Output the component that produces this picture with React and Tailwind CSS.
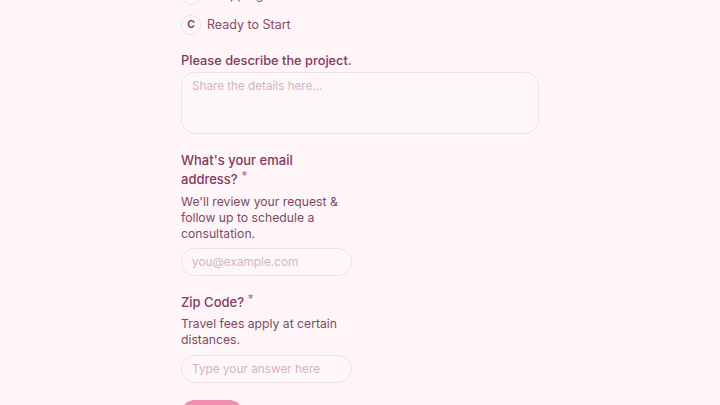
export default function App() {
  return (
    <div className="min-h-[405px] h-[405px] overflow-hidden bg-[#fdf5f8] font-['Inter',sans-serif]">
      <div className="w-[358px] mx-auto -mt-[15px] flex flex-col">
        <div className="flex flex-col gap-[10px]">
          <div className="flex items-center gap-[6px]">
            <span className="w-[20px] h-[20px] rounded-full border border-[#f0dde5] bg-[#fdf7fa] flex items-center justify-center text-[10.5px] font-semibold text-[#7b3a5a]">B</span>
            <span className="text-[12.5px] text-[#8b4a6a]">Shopping Around</span>
          </div>
          <div className="flex items-center gap-[6px]">
            <span className="w-[20px] h-[20px] rounded-full border border-[#f0dde5] bg-[#fdf7fa] flex items-center justify-center text-[10.5px] font-semibold text-[#7b3a5a]">C</span>
            <span className="text-[12.5px] text-[#8b4a6a]">Ready to Start</span>
          </div>
        </div>

        <label className="mt-[16px] text-[12.8px] font-medium text-[#86385e] leading-[20px]">Please describe the project.</label>
        <textarea
          placeholder="Share the details here..."
          className="mt-[1px] h-[62px] w-full resize-none rounded-[14px] border border-[#f2dfe7] bg-[#fef7fa] px-[10px] py-[3px] text-[11.7px] leading-[20px] text-[#7b3a5a] placeholder:text-[#d6b3c3] outline-none"
        />

        <div className="w-[171px] flex flex-col">
          <label className="mt-[17px] text-[13px] font-medium text-[#86385e] leading-[19px]">
            What's your email address?{" "}<span className="inline-block align-top text-[#b07a94] text-[12px] leading-[12px]">*</span>
          </label>
          <p className="mt-[5px] text-[12.2px] leading-[16px] text-[#7d4a62]">We'll review your request &amp; follow up to schedule a consultation.</p>
          <input
            placeholder="you@example.com"
            className="mt-[6px] h-[28px] w-full rounded-full border border-[#f2dfe7] bg-[#fef7fa] px-[10px] text-[11.8px] text-[#7b3a5a] placeholder:text-[#d6b3c3] outline-none"
          />

          <label className="mt-[17px] text-[13px] font-medium text-[#86385e] leading-[19px]">
            Zip Code?{" "}<span className="inline-block align-top text-[#b07a94] text-[12px] leading-[12px]">*</span>
          </label>
          <p className="mt-[4px] text-[12.2px] leading-[16px] text-[#7d4a62]">Travel fees apply at certain distances.</p>
          <input
            placeholder="Type your answer here"
            className="mt-[7px] h-[28px] w-full rounded-full border border-[#f2dfe7] bg-[#fef7fa] px-[10px] text-[11.8px] text-[#7b3a5a] placeholder:text-[#d6b3c3] outline-none"
          />
        </div>
        <button className="mt-[17px] w-[62px] h-[28px] rounded-full bg-[#f38fae] text-white text-[12px] font-medium self-start">Next</button>
      </div>
    </div>
  );
}
